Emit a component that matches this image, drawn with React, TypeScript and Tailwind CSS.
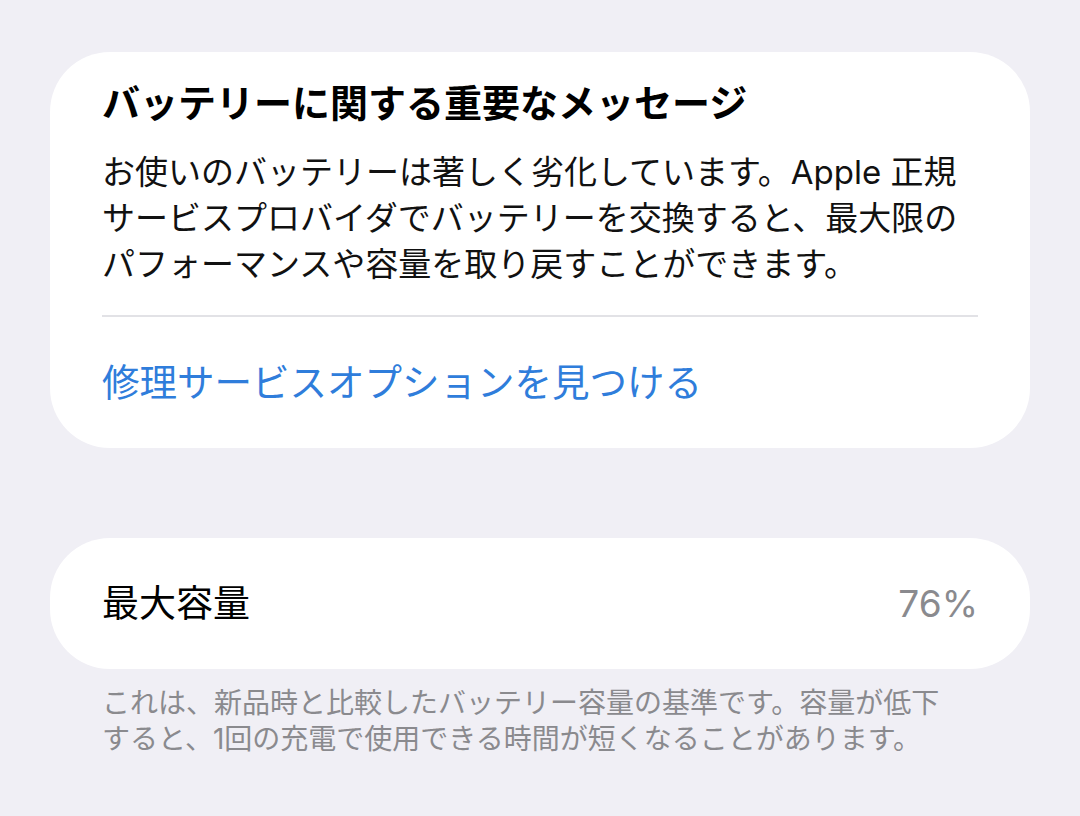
export default function App() {
  return (
    <div
      className="min-h-[816px] w-[1080px] bg-[#f0eff5] px-[50px] pt-[52px]"
      style={{ fontFamily: '"Inter", "Noto Sans CJK JP", sans-serif' }}
    >
      {/* Warning card */}
      <div className="rounded-[60px] bg-white px-[52px] pt-[28px] pb-[42px]">
        <h2 className="mb-[23px] text-[38px] font-bold leading-[46px] text-black">
          バッテリーに関する重要なメッセージ
        </h2>
        <p className="text-[33px] leading-[46px] text-[#111]">
          お使いのバッテリーは著しく劣化しています。Apple 正規
          <br />
          サービスプロバイダでバッテリーを交換すると、最大限の
          <br />
          パフォーマンスや容量を取り戻すことができます。
        </p>
        <div className="mt-[28px] h-[2px] bg-[#e2e2e6]" />
        <div className="mt-[43px] text-[37.5px] leading-[46px] text-[#2f7ddb]">
          修理サービスオプションを見つける
        </div>
      </div>

      {/* Maximum capacity */}
      <div className="mt-[90px] flex h-[131px] items-center justify-between rounded-[60px] bg-white px-[52px]">
        <span className="text-[37px] text-black">最大容量</span>
        <span className="text-[37px] text-[#8a8a8e]">76%</span>
      </div>

      <p className="mt-[16px] px-[52px] text-[28px] leading-[36px] text-[#8a8a8e]">
        これは、新品時と比較したバッテリー容量の基準です。容量が低下
        <br />
        すると、1回の充電で使用できる時間が短くなることがあります。
      </p>
    </div>
  );
}
